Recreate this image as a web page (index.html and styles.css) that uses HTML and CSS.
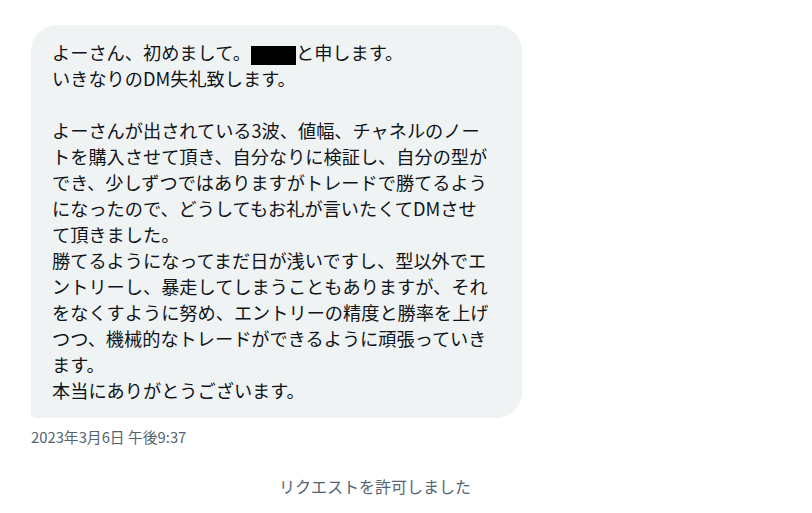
FILE: index.html
```html
<!DOCTYPE html>
<html lang="ja">
<head>
<meta charset="utf-8">
<link rel="stylesheet" href="styles.css">
</head>
<body>
<div class="conv">
  <div class="msg">
    <div class="bubble">
      <p class="text">よーさん、初めまして。<span class="redact"></span>と申します。<br>いきなりのDM失礼致します。<br><br>よーさんが出されている3波、値幅、チャネルのノー<br>トを購入させて頂き、自分なりに検証し、自分の型が<br>でき、少しずつではありますがトレードで勝てるよう<br>になったので、どうしてもお礼が言いたくてDMさせ<br>て頂きました。<br>勝てるようになってまだ日が浅いですし、型以外でエ<br>ントリーし、暴走してしまうこともありますが、それ<br>をなくすように努め、エントリーの精度と勝率を上げ<br>つつ、機械的なトレードができるように頑張っていき<br>ます。<br>本当にありがとうございます。</p>
    </div>
    <div class="time">2023年3月6日 午後9:37</div>
  </div>
  <div class="notice">リクエストを許可しました</div>
</div>
</body>
</html>
```
FILE: styles.css
```css
html, body {
  margin: 0;
  padding: 0;
  background: #ffffff;
}
body {
  font-family: "Noto Sans CJK JP", "Noto Sans", sans-serif;
  color: #0f1419;
}
.conv {
  width: 750px;
  padding-top: 25px;
}
.msg {
  padding-left: 31px;
}
.bubble {
  width: 491px;
  box-sizing: border-box;
  padding: 14px 21px 15px;
  background: #eff3f4;
  border-radius: 26px 26px 26px 5px;
}
.text {
  margin: 0;
  font-size: 18.2px;
  line-height: 26px;
  white-space: nowrap;
}
.redact {
  display: inline-block;
  width: 45px;
  height: 19px;
  background: #000;
  vertical-align: -5px;
}
.time {
  margin-top: 9px;
  font-size: 14.8px;
  line-height: 20px;
  color: #536471;
}
.notice {
  margin-top: 28px;
  text-align: center;
  font-size: 16px;
  line-height: 22px;
  color: #536471;
}
```
